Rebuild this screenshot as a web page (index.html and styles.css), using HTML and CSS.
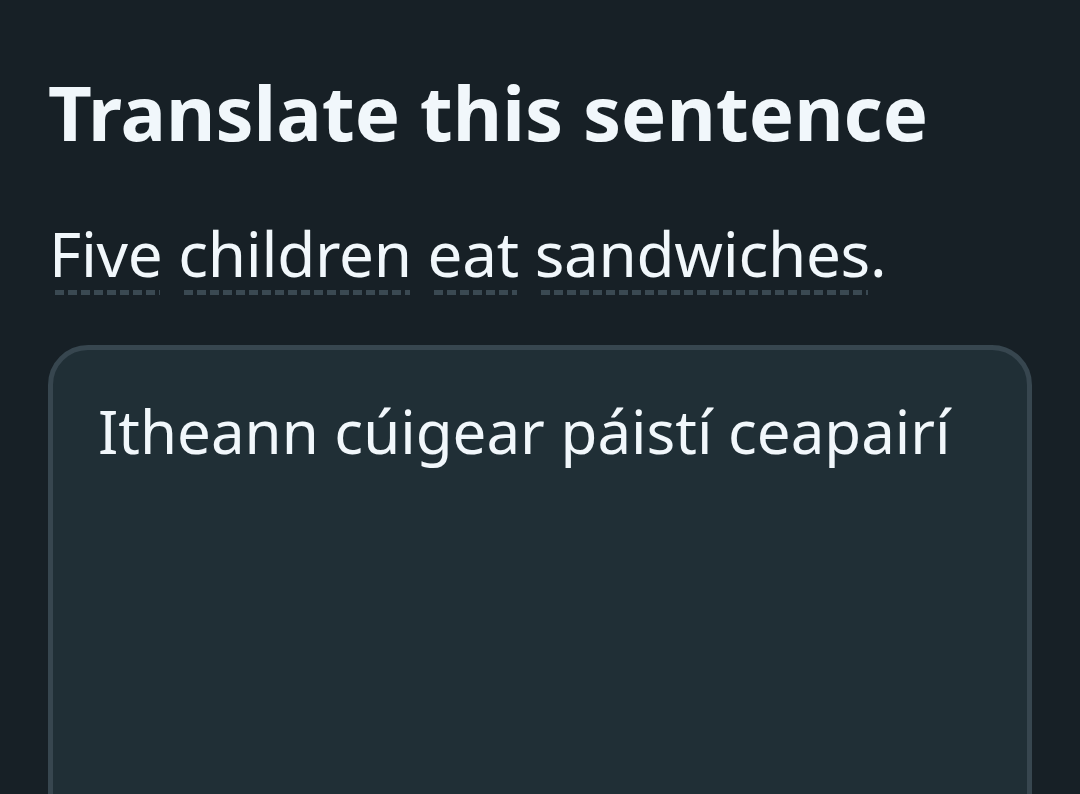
FILE: index.html
```html
<!DOCTYPE html>
<html lang="en">
<head>
<meta charset="utf-8">
<link rel="stylesheet" href="styles.css">
</head>
<body>
<main class="page">
  <h1 class="title">Translate this sentence</h1>
  <p class="prompt">
    <span class="word">Five</span> <span class="word">children</span> <span class="word">eat</span> <span class="word">sandwiches</span>.
  </p>
  <div class="answer">Itheann cúigear páistí ceapairí</div>
</main>
</body>
</html>
```
FILE: styles.css
```css
html, body {
  margin: 0;
  padding: 0;
  background: #172026;
  height: 100%;
  overflow: hidden;
}
.page {
  padding: 62px 48px 0 48px;
  font-family: "Noto Sans", "DejaVu Sans", sans-serif;
  color: #f1f7fb;
}
.title {
  margin: 0;
  font-size: 76px;
  font-weight: 700;
  line-height: 100px;
  letter-spacing: 0;
}
.prompt {
  margin: 51px 0 0 1px;
  font-size: 62px;
  line-height: 80px;
  font-weight: 400;
  letter-spacing: -0.3px;
}
.word {
  position: relative;
  display: inline-block;
  padding-bottom: 7px;
  line-height: 70px;
}
.word::after {
  content: "";
  position: absolute;
  left: 6px;
  right: 2px;
  bottom: 0;
  height: 5px;
  background-image: linear-gradient(90deg, #3a4952 0px, #3a4952 9px, transparent 9px, transparent 13px);
  background-size: 13px 5px;
  background-repeat: repeat-x;
}
.answer {
  margin-top: 50px;
  height: 600px;
  box-sizing: border-box;
  background: #202f36;
  border: 5px solid #37464f;
  border-radius: 40px;
  padding: 36px 45px;
  font-size: 60px;
  line-height: 90px;
}
```
